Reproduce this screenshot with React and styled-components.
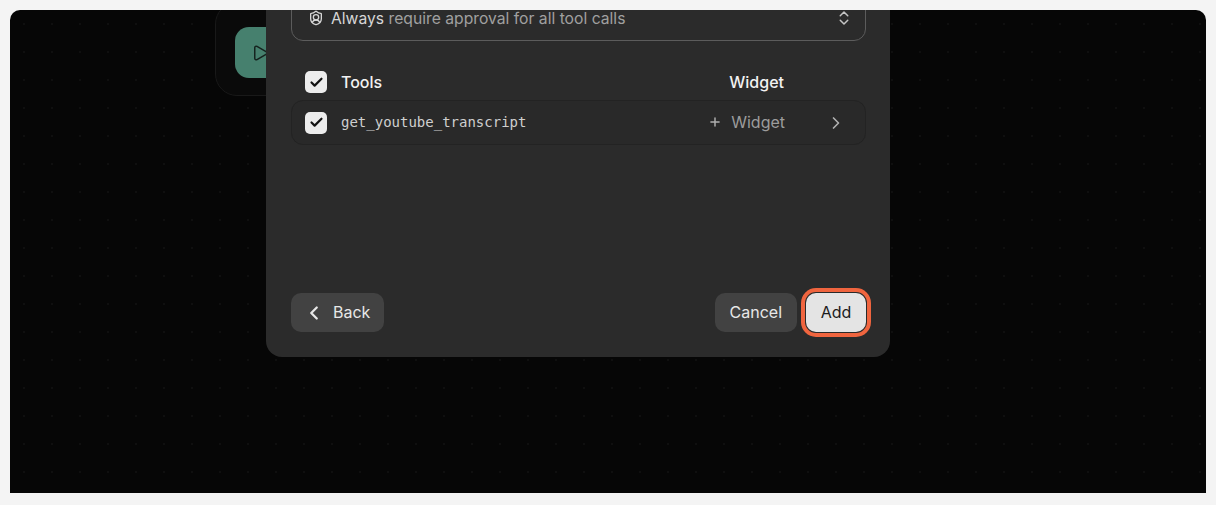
import styled, { createGlobalStyle } from "styled-components";
import { Check, ChevronLeft, ChevronRight, ChevronsUpDown, Play, Plus, ShieldUser } from "lucide-react";

const GlobalStyle = createGlobalStyle`
  html, body {
    margin: 0;
    padding: 0;
    background: #f4f4f4;
  }
  body {
    font-family: Inter, "Liberation Sans", sans-serif;
  }
`;

const Page = styled.div`
  width: 1216px;
  height: 505px;
  padding: 10px 10px 12px;
  box-sizing: border-box;
  overflow: hidden;
`;

const Canvas = styled.div`
  position: relative;
  height: 483px;
  display: flex;
  justify-content: center;
  align-items: flex-end;
  padding: 0 60px 136px 0;
  box-sizing: border-box;
  overflow: hidden;
  border-radius: 10px 10px 0 0;
  background-color: #060606;
  background-image: radial-gradient(circle, #0f0f0f 1px, transparent 1.2px);
  background-size: 28px 28px;
`;

const StartNode = styled.div`
  position: absolute;
  left: 205px;
  top: -8px;
  width: 110px;
  height: 94px;
  padding: 24px 19px;
  box-sizing: border-box;
  border: 1.5px solid #191919;
  border-radius: 22px;
  background: #0a0a0a;
`;

const NodeIcon = styled.div`
  width: 76px;
  height: 51px;
  display: flex;
  align-items: center;
  padding-left: 16px;
  box-sizing: border-box;
  border-radius: 14px;
  background: #46806e;
  color: #15231f;
`;

const Modal = styled.div`
  position: relative;
  width: 624px;
  flex-shrink: 0;
  padding: 0 24px 25px 25px;
  box-sizing: border-box;
  border-radius: 0 0 16px 16px;
  background: #2b2b2b;
`;

const Select = styled.div`
  height: 46px;
  display: flex;
  align-items: center;
  gap: 7px;
  padding: 0 12px 0 16px;
  box-sizing: border-box;
  border: 1px solid #5c5c5c;
  border-radius: 12px;
  font-size: 15.7px;
  color: #a0a0a0;
`;

const SelectText = styled.span`
  flex: 1;
  b {
    font-weight: 400;
    color: #d6d6d6;
  }
`;

const ToolsHeader = styled.div`
  display: flex;
  align-items: center;
  height: 22px;
  margin-top: 30px;
  padding-left: 14px;
  font-size: 16px;
  font-weight: 500;
  color: #f2f2f2;
`;

const HeaderLabel = styled.span`
  flex: 1;
  margin-left: 14px;
`;

const WidgetLabel = styled.span`
  margin-right: 82px;
`;

const ToolRow = styled.div`
  height: 45px;
  display: flex;
  align-items: center;
  margin-top: 7px;
  padding: 0 19px 0 13px;
  box-sizing: border-box;
  border: 1px solid #232323;
  border-radius: 12px;
  background: #292929;
`;

const CheckBox = styled.span`
  width: 22px;
  height: 22px;
  flex-shrink: 0;
  display: flex;
  align-items: center;
  justify-content: center;
  border-radius: 5px;
  background: #ededed;
  color: #141414;
`;

const ToolName = styled.span`
  flex: 1;
  margin-left: 14px;
  padding-bottom: 2px;
  font-family: "DejaVu Sans Mono", "Liberation Mono", monospace;
  font-size: 14px;
  color: #cfcfcf;
`;

const AddWidget = styled.span`
  display: flex;
  align-items: center;
  gap: 9px;
  margin-right: 41px;
  padding-bottom: 2px;
  font-size: 16px;
  color: #9c9c9c;
`;

const Chevron = styled.span`
  display: flex;
  color: #b0b0b0;
`;

const Footer = styled.div`
  display: flex;
  align-items: center;
  margin-top: 148px;
`;

const Button = styled.button`
  height: 39px;
  display: flex;
  align-items: center;
  gap: 8px;
  padding: 0 15px 2px;
  border: none;
  border-radius: 10px;
  background: #424242;
  font-family: inherit;
  font-size: 16px;
  font-weight: 400;
  color: #e8e8e8;
`;

const BackButton = styled(Button)`
  margin-right: auto;
  padding: 0 14px 0 12px;
  span {
    padding-bottom: 2px;
  }
`;

const AddButton = styled(Button)`
  width: 60px;
  margin-left: 9px;
  justify-content: center;
  padding: 0 0 2px;
  background: #e4e4e4;
  color: #1c1c1c;
  box-shadow: 0 0 0 1px #2a2a2a, 0 0 0 5px #f0653f;
`;

export default function App() {
  return (
    <Page>
      <GlobalStyle />
      <Canvas>
        <StartNode>
          <NodeIcon>
            <Play size={18} strokeWidth={2} />
          </NodeIcon>
        </StartNode>
        <Modal>
          <Select>
            <ShieldUser size={16} color="#d6d6d6" />
            <SelectText>
              <b>Always</b> require approval for all tool calls
            </SelectText>
            <ChevronsUpDown size={18} color="#c4c4c4" />
          </Select>
          <ToolsHeader>
            <CheckBox>
              <Check size={15} strokeWidth={3.5} />
            </CheckBox>
            <HeaderLabel>Tools</HeaderLabel>
            <WidgetLabel>Widget</WidgetLabel>
          </ToolsHeader>
          <ToolRow>
            <CheckBox>
              <Check size={15} strokeWidth={3.5} />
            </CheckBox>
            <ToolName>get_youtube_transcript</ToolName>
            <AddWidget>
              <Plus size={14} strokeWidth={2.5} color="#b0b0b0" />
              Widget
            </AddWidget>
            <Chevron>
              <ChevronRight size={20} />
            </Chevron>
          </ToolRow>
          <Footer>
            <BackButton>
              <ChevronLeft size={22} strokeWidth={2.5} />
              <span>Back</span>
            </BackButton>
            <Button>Cancel</Button>
            <AddButton>Add</AddButton>
          </Footer>
        </Modal>
      </Canvas>
    </Page>
  );
}
